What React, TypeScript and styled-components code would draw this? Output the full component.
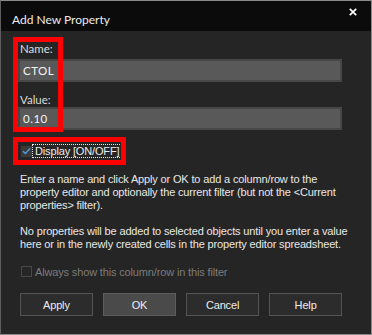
import * as React from 'react';
import styled, { createGlobalStyle } from 'styled-components';

const GlobalStyle = createGlobalStyle`
  html, body {
    margin: 0;
    padding: 0;
    background: #252525;
  }
  * {
    box-sizing: border-box;
  }
`;

const Dialog = styled.div`
  width: 372px;
  height: 335px;
  background: #252525;
  border: 1px solid #8a8a8a;
  border-left-color: #5e5e5e;
  display: flex;
  flex-direction: column;
  overflow: hidden;
`;

const TitleBar = styled.div`
  height: 30px;
  background: #0b0b0b;
  display: flex;
  align-items: flex-start;
  justify-content: space-between;
  padding: 0 14px 0 11px;
  flex-shrink: 0;
`;

const Title = styled.span`
  color: #ececec;
  font-family: Lato, 'Noto Sans', sans-serif;
  font-size: 12px;
  line-height: 14px;
  margin-top: 12px;
`;

const CloseBtn = styled.div`
  width: 8px;
  height: 8px;
  margin-top: 7px;
  display: flex;
`;

const Body = styled.div`
  position: relative;
  flex: 1;
  padding: 11px 29px 0 17px;
  display: flex;
  flex-direction: column;
`;

const FieldLabel = styled.div<{ gap: number }>`
  color: #dcdcdc;
  font-family: Lato, 'Noto Sans', sans-serif;
  font-size: 11.5px;
  line-height: 14px;
  height: 14px;
  margin: ${(p) => p.gap}px 0 0 2px;
`;

const TextBox = styled.div<{ gap: number }>`
  height: 23px;
  margin-top: ${(p) => p.gap}px;
  background: #595959;
  border: 2px solid #474747;
  color: #f4f4f4;
  font-family: Lato, 'Noto Sans', sans-serif;
  font-size: 11.5px;
  letter-spacing: 0.5px;
  line-height: 19px;
  padding-left: 3px;
`;

const CheckRow = styled.div<{ gap: number }>`
  display: flex;
  align-items: center;
  height: 14px;
  margin-top: ${(p) => p.gap}px;
  padding-left: 3px;
`;

const Box = styled.div<{ disabled?: boolean }>`
  width: 11px;
  height: 11px;
  flex-shrink: 0;
  background: ${(p) => (p.disabled ? '#262626' : '#3a3a3a')};
  border: 1px solid ${(p) => (p.disabled ? '#484848' : '#3a3a3a')};
  display: flex;
  align-items: center;
  justify-content: center;
`;

const CheckText = styled.span<{ disabled?: boolean; focused?: boolean }>`
  font-family: 'Liberation Sans', Arial, sans-serif;
  font-size: 11px;
  letter-spacing: -0.15px;
  line-height: 12px;
  color: ${(p) => (p.disabled ? '#7c7c7c' : '#ececec')};
  padding: 0 2px;
  border: 1px dotted ${(p) => (p.focused ? '#e8e8e8' : 'transparent')};
`;

const Info = styled.p`
  margin: 14.5px 0 0 2px;
  color: #e8e8e8;
  font-family: 'Liberation Sans', Arial, sans-serif;
  font-size: 11px;
  letter-spacing: -0.15px;
  line-height: 13px;
  white-space: nowrap;
`;

const ButtonRow = styled.div`
  display: flex;
  gap: 10.3px;
  margin-top: 14.5px;
  padding-left: 2px;
`;

const Button = styled.div<{ primary?: boolean }>`
  width: 75px;
  height: 23px;
  background: ${(p) => (p.primary ? '#4a4a4a' : '#2c2c2c')};
  border: 1px solid ${(p) => (p.primary ? '#5c5c5c' : '#545454')};
  color: #eeeeee;
  font-family: 'Liberation Sans', Arial, sans-serif;
  font-size: 11px;
  letter-spacing: -0.15px;
  display: flex;
  align-items: center;
  justify-content: center;
`;

const Highlight = styled.div<{ x: number; y: number; w: number; h: number }>`
  position: absolute;
  left: ${(p) => p.x}px;
  top: ${(p) => p.y}px;
  width: ${(p) => p.w}px;
  height: ${(p) => p.h}px;
  border: 5px solid #ff0000;
  pointer-events: none;
`;

const CloseIcon = () => (
  <svg width="8" height="8" viewBox="0 0 8 8">
    <path d="M0.8 0.8 L7.2 7.2 M7.2 0.8 L0.8 7.2" stroke="#ffffff" strokeWidth="1.7" />
  </svg>
);

const Tick = () => (
  <svg width="9" height="8" viewBox="0 0 9 8">
    <path d="M1 4.2 L3.4 6.6 L8 1.4" stroke="#4aa3ec" strokeWidth="1.4" fill="none" />
  </svg>
);

export default function App() {
  return (
    <>
      <GlobalStyle />
      <Dialog>
        <TitleBar>
          <Title>Add New Property</Title>
          <CloseBtn>
            <CloseIcon />
          </CloseBtn>
        </TitleBar>
        <Body>
          <FieldLabel gap={0}>Name:</FieldLabel>
          <TextBox gap={3}>CTOL</TextBox>
          <FieldLabel gap={11}>Value:</FieldLabel>
          <TextBox gap={0}>0.10</TextBox>
          <CheckRow gap={14}>
            <Box>
              <Tick />
            </Box>
            <CheckText focused>Display [ON/OFF]</CheckText>
          </CheckRow>
          <Info>
            Enter a name and click Apply or OK to add a column/row to the
            <br />
            property editor and optionally the current filter (but not the &lt;Current
            <br />
            properties&gt; filter).
            <br />
            <br />
            No properties will be added to selected objects until you enter a value
            <br />
            here or in the newly created cells in the property editor spreadsheet.
          </Info>
          <CheckRow gap={14}>
            <Box disabled />
            <CheckText disabled>Always show this column/row in this filter</CheckText>
          </CheckRow>
          <ButtonRow>
            <Button>Apply</Button>
            <Button primary>OK</Button>
            <Button>Cancel</Button>
            <Button>Help</Button>
          </ButtonRow>
          <Highlight x={12} y={6} w={50} h={95} />
          <Highlight x={12} y={106} w={113} h={28} />
        </Body>
      </Dialog>
    </>
  );
}
